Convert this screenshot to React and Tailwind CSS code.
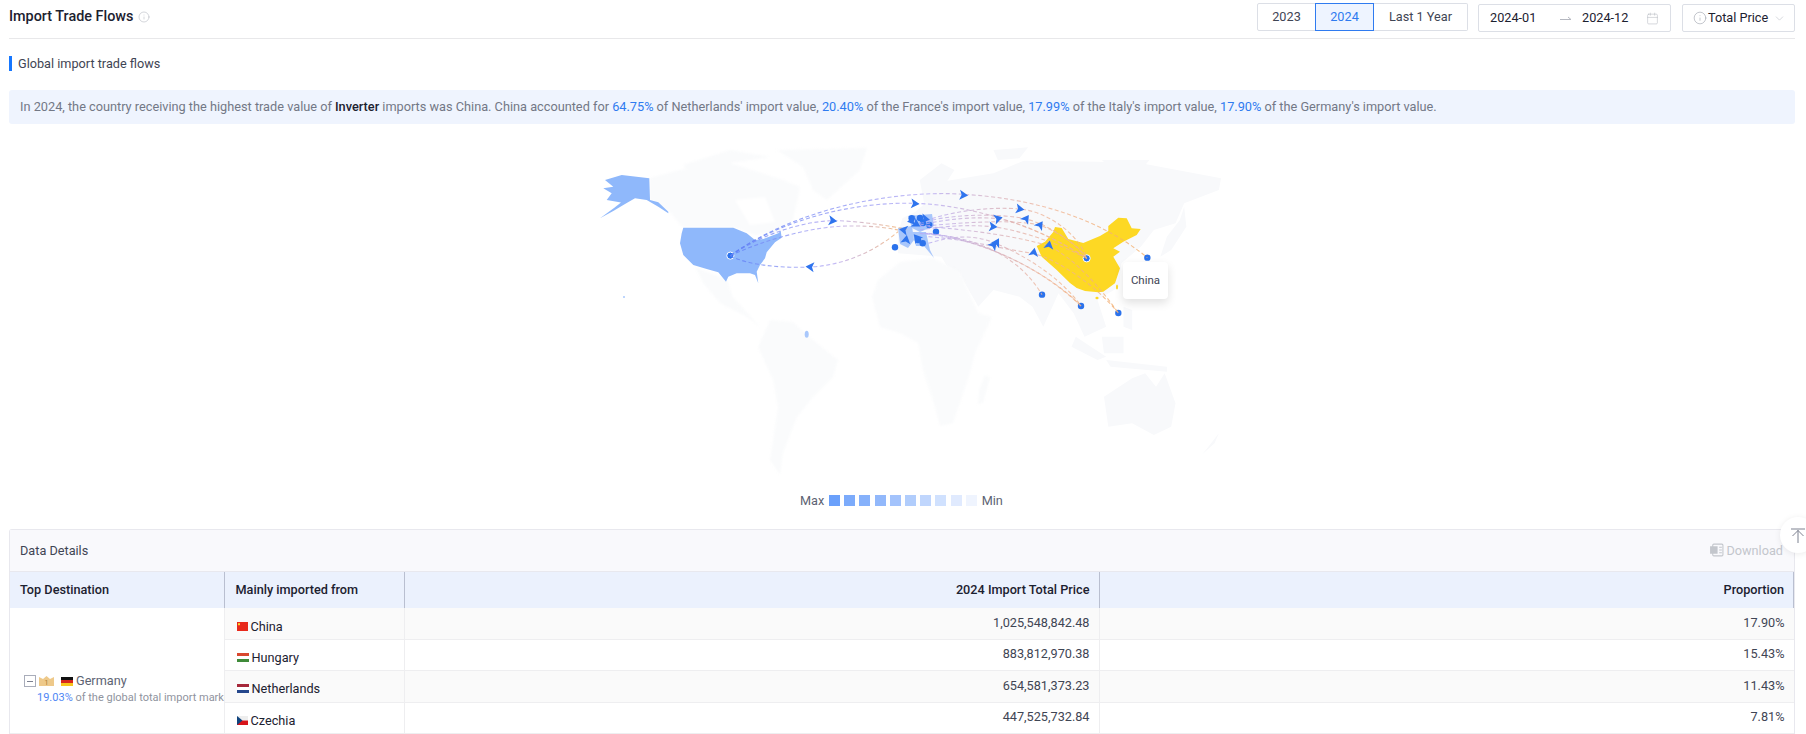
import React from 'react';
import { Info, Calendar, ChevronDown } from 'lucide-react';

const sx = (x) => x / 2.307;
const sy = (y) => y / 3;

// faint land, written in the coordinates of a 1568x1020 map sheet
const land = [
  // eurasia
  'M780,280 L790,235 L820,215 L860,170 L880,125 L1000,100 L1070,62 L1240,65 L1350,72 L1525,115 L1520,150 L1440,190 L1420,250 L1370,270 L1340,320 L1295,370 L1290,440 L1240,480 L1260,560 L1210,590 L1185,520 L1150,460 L1115,560 L1090,500 L1060,470 L1000,450 L965,500 L930,420 L900,395 L880,350 L830,345 L780,340 Z',
  // scandinavia and arctic bits
  'M830,120 L880,70 L910,90 L870,170 L840,190 Z',
  'M1000,30 L1080,22 L1060,55 L1010,60 Z',
  'M1250,60 L1360,60 L1350,75 L1260,72 Z',
  // islands of south east asia
  'M1190,590 L1260,650 L1240,660 L1180,620 Z',
  'M1250,590 L1300,590 L1300,640 L1255,640 Z',
  'M1260,660 L1400,680 L1400,695 L1270,680 Z',
  'M1300,500 L1320,510 L1320,570 L1300,560 Z',
  // japan
  'M1400,290 L1430,240 L1440,200 L1445,260 L1410,330 L1385,350 Z',
  // australia
  'M1255,770 L1320,715 L1350,700 L1375,740 L1395,700 L1420,790 L1410,860 L1370,885 L1320,850 L1265,860 Z',
  // new zealand
  'M1490,930 L1520,880 L1510,910 L1480,945 Z',
];

// same, in page coordinates
const landPage = [
  // north america
  'M650,178 L680,170 L730,163 L783,180 L800,187 L793,220 L780,232 L755,235 L733,227 L682,227 L670,212 L650,200 Z',
  'M683,165 L730,150 L770,157 L730,163 L690,175 Z',
  // mexico
  'M695,267 L727,280 L733,297 L760,327 L747,317 L720,303 L703,283 Z',
  // greenland
  'M777,150 L867,148 L860,170 L827,200 L813,190 L803,167 Z',
  // south america
  'M758,347 L770,320 L793,322 L813,340 L838,360 L833,377 L813,397 L797,417 L783,453 L780,475 L770,460 L778,407 L773,380 Z',
  // africa
  'M872,297 L878,280 L900,262 L933,258 L960,272 L978,313 L992,317 L975,353 L970,373 L953,423 L940,426 L932,397 L923,370 L918,343 L900,333 L880,327 Z',
  // madagascar
  'M985,375 L990,378 L983,403 L978,404 L979,390 Z',
];

const bayWhite = 'M735,200 L765,197 L775,222 L750,225 Z';

const usa = 'M683.3,227.7 L733.3,227.7 L746.7,233.3 L755,240 L763.3,239 L778.3,233.3 L780.7,231 L781.7,237.7 L775,242.3 L766.7,252.3 L765,258.3 L760,265 L756.7,271.7 L758.3,283.3 L755,275 L750,273.3 L736.7,273.3 L728.3,276.7 L726,281.7 L718.3,272.3 L706.7,269 L693.3,265 L683.3,255 L680,243.3 L681.7,233.3 Z';
const alaska = 'M605,180 L621.7,175 L649.3,178.3 L650,200 L658.3,202.3 L668.3,211.7 L668.3,213.3 L658.3,206.7 L646.7,200 L635,198.3 L625,204 L613.3,211 L600,218.3 L614,208 L621,202.5 L606.7,200 L611.7,193.3 L603.3,188.3 L613.3,186.7 Z';
const china = 'M1118.3,217.7 L1126.7,218.3 L1131.7,228.3 L1140.7,229 L1136.7,235 L1123.3,241.7 L1113.3,248.3 L1120,251.7 L1113.3,256.7 L1120,268.3 L1115,283.3 L1103.3,291.7 L1098.3,292.3 L1085,291 L1076.7,288 L1070,283 L1056.7,270 L1041.7,256.7 L1036.7,246 L1045,241.7 L1053.3,232 L1055,227 L1061.7,228 L1068.3,239 L1083.3,243 L1100,236 L1108.3,231 L1108.3,226 Z';

// light patches of the european countries
const europe = [
  'M898,228 L912,226 L914,240 L908,248 L900,244 Z',
  'M908,216 L932,214 L934,226 L920,232 L912,228 Z',
  'M912,232 L926,232 L930,250 L934,258 L924,246 L916,246 Z',
];

const arcs = [
  ['a', 'M393,347 C560,190 800,150 930,163 C1100,175 1250,240 1355,353'],
  ['a', 'M393,347 C520,230 690,185 818,190 C960,195 1120,270 1215,355'],
  ['b', 'M393,347 C470,280 560,245 628,242 C680,242 750,255 800,268'],
  ['b', 'M393,347 C470,300 590,255 677,258 C720,258 750,262 780,270'],
  ['b', 'M393,347 C430,375 510,385 578,381 C660,375 730,330 780,275'],
  ['a', 'M830,250 C900,210 1000,200 1060,207 C1130,215 1200,290 1215,355'],
  ['a', 'M830,255 C900,235 960,230 1010,236 C1060,245 1150,300 1215,355'],
  ['a', 'M830,250 C900,220 1020,220 1075,237 C1130,255 1190,310 1215,355'],
  ['a', 'M830,260 C900,250 1050,235 1107,256 C1150,275 1200,320 1215,355'],
  ['a', 'M830,270 C900,255 950,255 998,260 C1060,270 1150,310 1215,355'],
  ['a', 'M850,310 C900,290 950,280 1005,310 C1080,350 1160,420 1202,498'],
  ['a', 'M840,280 C940,290 1050,330 1112,464'],
  ['a', 'M830,280 C950,290 1100,370 1202,498'],
  ['a', 'M850,290 C950,300 1030,330 1092,340 C1150,360 1240,440 1288,519'],
  ['a', 'M850,260 C950,270 1060,290 1128,318 C1180,350 1240,430 1288,519'],
  ['a', 'M850,280 C980,300 1130,400 1202,498'],
];

const arrows = [
  [930, 165, 5], [818, 191, 5], [628, 242, 8], [578, 381, 185], [1060, 207, 10], [1010, 236, -15],
  [1075, 237, -55], [1107, 256, -55], [998, 260, 5], [1000, 316, -50], [1007, 308, -60], [1128, 316, -80], [1093, 338, -80],
];

const dots = [
  [1355, 353], [1112, 464], [1202, 498], [1288, 519],
];

// european dots and arrows, page coordinates
const euroDots = [
  [911.7, 218.3], [920, 218], [923, 223], [929.3, 225], [936, 231.7], [895, 247.3], [918, 240], [922.7, 243.3],
];
const euroArrows = [
  [904, 230, 190], [917, 238, -130], [912, 221, 170], [925, 219, 10], [906, 240, -80], [916, 224, 30],
];

function WorldMap() {
  return (
    <svg viewBox="0 0 680 340" className="block w-[680px] h-[340px]">
      <defs>
        <linearGradient id="flowA" gradientUnits="userSpaceOnUse" x1="400" y1="0" x2="1300" y2="0">
          <stop offset="0" stopColor="#5f80f6" />
          <stop offset="0.5" stopColor="#b7abf3" />
          <stop offset="0.8" stopColor="#f0b79a" />
          <stop offset="1" stopColor="#f3b070" />
        </linearGradient>
        <linearGradient id="flowB" gradientUnits="userSpaceOnUse" x1="400" y1="0" x2="790" y2="0">
          <stop offset="0" stopColor="#5f80f6" />
          <stop offset="0.6" stopColor="#b7abf3" />
          <stop offset="1" stopColor="#f3b070" />
        </linearGradient>
      </defs>
      <g transform={`scale(${1 / 2.307} ${1 / 3})`} className="blur-[1px]">
        {land.map((d, i) => <path key={i} d={d} fill="#f8f9fb" />)}
      </g>
      <g transform="translate(-560 -140)" className="blur-[1px]">
        {landPage.map((d, i) => <path key={i} d={d} fill="#fafbfc" />)}
        <path d={bayWhite} fill="#ffffff" />
      </g>
      <g transform="translate(-560 -140)">
        <path d={alaska} fill="#8fb8fb" />
        <path d={usa} fill="#8fb8fb" />
        <ellipse cx="806.7" cy="334.3" rx="2" ry="3.5" fill="#a9c8fc" />
        <circle cx="624" cy="297" r="1" fill="#a9c8fc" />
        <path d={china} fill="#fdd824" />
        <ellipse cx="1097" cy="298" rx="1.6" ry="1.3" fill="#fdd824" />
        <ellipse cx="1117" cy="287" rx="1" ry="2.5" fill="#fdd824" />
        {europe.map((d, i) => <path key={i} d={d} fill="#a8c6fb" />)}
        {euroDots.map(([x, y], i) => <circle key={i} cx={x} cy={y} r="3.2" fill="#2b72ec" />)}
      </g>
      {dots.map(([x, y], i) => <circle key={i} cx={sx(x)} cy={sy(y)} r="3.2" fill="#2b72ec" />)}
      <circle cx={sx(393)} cy={sy(347)} r="3.6" fill="#2b72ec" stroke="#ffffff" strokeWidth="1" />
      <circle cx={sx(1215)} cy={sy(355)} r="3.6" fill="#2b72ec" stroke="#ffffff" strokeWidth="1" />
      <g transform={`scale(${1 / 2.307} ${1 / 3})`}>
        {arcs.map(([g, d], i) => (
          <path key={i} d={d} fill="none" stroke={g === 'a' ? 'url(#flowA)' : 'url(#flowB)'} strokeWidth="1.1"
            strokeDasharray="4 2.5" vectorEffect="non-scaling-stroke" opacity="0.8" />
        ))}
      </g>
      {arrows.map(([x, y, r], i) => (
        <polygon key={i} points="-3.5,-5 5,0 -3.5,5 -1.5,0" fill="#2f74ee"
          transform={`translate(${sx(x)} ${sy(y)}) rotate(${r})`} />
      ))}
      <g transform="translate(-560 -140)">
        {euroArrows.map(([x, y, r], i) => (
          <polygon key={i} points="-3.5,-5 5,0 -3.5,5 -1.5,0" fill="#2f74ee" transform={`translate(${x} ${y}) rotate(${r})`} />
        ))}
      </g>
    </svg>
  );
}

function FlagCN() {
  return (
    <svg width="11" height="9" viewBox="0 0 11 9" className="shrink-0">
      <rect width="11" height="9" fill="#e8291c" />
      <rect x="1" y="1.2" width="2" height="2" fill="#fbd92a" />
    </svg>
  );
}

function FlagStripes({ colors }) {
  return (
    <svg width="12" height="9" viewBox="0 0 12 9" className="shrink-0">
      <rect width="12" height="3" y="0" fill={colors[0]} />
      <rect width="12" height="3" y="3" fill={colors[1]} />
      <rect width="12" height="3" y="6" fill={colors[2]} />
    </svg>
  );
}

function FlagCZ() {
  return (
    <svg width="11" height="9" viewBox="0 0 11 9" className="shrink-0">
      <rect width="11" height="4.5" fill="#eeeeee" />
      <rect width="11" height="4.5" y="4.5" fill="#d7141a" />
      <polygon points="0,0 5.5,4.5 0,9" fill="#11457e" />
    </svg>
  );
}

const rows = [
  { name: 'China', flag: <FlagCN />, price: '1,025,548,842.48', share: '17.90%', bg: 'bg-[#fafafa]', h: 'h-[31px]' },
  { name: 'Hungary', flag: <FlagStripes colors={['#d9482f', '#ffffff', '#3f8b3a']} />, price: '883,812,970.38', share: '15.43%', bg: 'bg-white', h: 'h-[31px]' },
  { name: 'Netherlands', flag: <FlagStripes colors={['#a6283a', '#ffffff', '#25478c']} />, price: '654,581,373.23', share: '11.43%', bg: 'bg-[#fafafa]', h: 'h-[32px]' },
  { name: 'Czechia', flag: <FlagCZ />, price: '447,525,732.84', share: '7.81%', bg: 'bg-white', h: 'h-[31px]' },
];

const legend = ['bg-[#6aa0fb]', 'bg-[#7cabfb]', 'bg-[#86b1fb]', 'bg-[#92b8fb]', 'bg-[#a3c3fc]', 'bg-[#b1cdfc]', 'bg-[#c0d6fd]', 'bg-[#d0e1fe]', 'bg-[#e0eafe]', 'bg-[#eff4fe]'];

export default function App() {
  return (
    <div className="relative w-full h-[734px] overflow-hidden bg-white pl-[9px] pr-[11px] font-['Roboto',sans-serif] text-[12.7px] text-[#5d6373]">
      {/* header */}
      <div className="flex items-start justify-between h-[39px] border-b border-[#e8e8ea]">
        <div className="flex items-center gap-[5px] h-[34px]">
          <span className="text-[14.4px] font-medium text-[#1c2130]">Import Trade Flows</span>
          <Info size={12} strokeWidth={1} className="text-[#a8acb6]" />
        </div>
        <div className="flex items-start pt-[3px]">
          <div className="flex h-[28px] text-[#3f4554]">
            <div className="w-[59px] flex items-center justify-center border border-[#dcdfe6] rounded-l-[2px]">2023</div>
            <div className="w-[59px] flex items-center justify-center border border-[#2f7bf0] bg-[#eef4ff] text-[#2f7bf0] -ml-px">2024</div>
            <div className="w-[94px] flex items-center justify-center border border-[#dcdfe6] border-l-0 rounded-r-[2px]">Last 1 Year</div>
          </div>
          <div className="ml-[10px] mt-px w-[193px] h-[28px] flex items-center border border-[#dcdfe6] rounded-[2px] pl-[11px] text-[#1c2130]">
            <span className="w-[66px]">2024-01</span>
            <svg width="14" height="8" viewBox="0 0 14 8" className="ml-[3px] text-[#b5b8c0]">
              <path d="M1 5.5 H12 L9 3" fill="none" stroke="currentColor" strokeWidth="1" />
            </svg>
            <span className="ml-[9px] w-[64px]">2024-12</span>
            <Calendar size={13} strokeWidth={1} className="text-[#b5b8c0]" />
          </div>
          <div className="ml-[11px] mt-px w-[113px] h-[28px] flex items-center border border-[#dcdfe6] rounded-[2px] pl-[10px] text-[#1c2130]">
            <Info size={14} strokeWidth={1} className="text-[#9a9ea8] mr-px" />
            <span>Total Price</span>
            <ChevronDown size={13} strokeWidth={1} className="ml-[5px] text-[#b5b8c0]" />
          </div>
        </div>
      </div>

      {/* section label */}
      <div className="flex items-center mt-[17px] h-[15px]">
        <div className="w-[3px] h-[15px] bg-[#1677ff]" />
        <span className="ml-[6px] text-[#3f4554]">Global import trade flows</span>
      </div>

      {/* summary */}
      <div className="mt-[19px] h-[34px] flex items-center rounded-[3px] bg-[#eff4fe] px-[11px] text-[12.74px] text-[#737886] whitespace-nowrap">
        <span>
          In 2024, the country receiving the highest trade value of <span className="font-medium text-[#1c2130]">Inverter</span> imports was China. China accounted for <span className="text-[#2f7bf0]">64.75%</span> of Netherlands' import value, <span className="text-[#2f7bf0]">20.40%</span> of the France's import value, <span className="text-[#2f7bf0]">17.99%</span> of the Italy's import value, <span className="text-[#2f7bf0]">17.90%</span> of the Germany's import value.
        </span>
      </div>

      {/* map */}
      <div className="relative h-[366px] pt-[16px] pl-[551px]">
        <WorldMap />
        <div className="absolute left-[1114px] top-[138px] w-[45px] h-[37px] flex items-center justify-center rounded-[4px] bg-white text-[11.5px] text-[#3f4554] shadow-[0_4px_10px_rgba(0,0,0,0.12)]">China</div>
      </div>

      {/* legend */}
      <div className="flex items-center h-[11px] mt-[5px] ml-[791px]">
        <span className="w-[29px]">Max</span>
        <div className="flex gap-[4.2px]">
          {legend.map((c) => <div key={c} className={`w-[11px] h-[11px] ${c}`} />)}
        </div>
        <span className="ml-[5px]">Min</span>
      </div>

      {/* table card */}
      <div className="mt-[23px] border border-b-0 border-[#e8e8ee] rounded-t-[3px]">
        <div className="flex items-center justify-between h-[42px] border-b border-[#e8e8ee] bg-[#f9f9fc] pl-[10px] pr-[11px]">
          <span className="text-[#3f4554]">Data Details</span>
          <div className="flex items-center gap-[3px] text-[#c3c6cc]">
            <svg width="15" height="14" viewBox="0 0 14 13" fill="none">
              <rect x="3.5" y="1" width="9.5" height="11" rx="1" stroke="currentColor" />
              <rect x="1" y="3" width="7" height="7" fill="currentColor" />
              <path d="M9.5 4 H12 M9.5 6.5 H12 M9.5 9 H12" stroke="currentColor" />
            </svg>
            <span>Download</span>
          </div>
        </div>
        <table className="w-full table-fixed border-collapse">
          <colgroup>
            <col className="w-[214px]" />
            <col className="w-[180px]" />
            <col className="w-[695px]" />
            <col />
          </colgroup>
          <thead>
            <tr className="h-[36px] bg-[#ebf1fd] text-[#1c2130]">
              <th className="font-medium text-left pl-[10px] border-r border-[#b9bfd0]">Top Destination</th>
              <th className="font-medium text-left pl-[11px] border-r border-[#b9bfd0]">Mainly imported from</th>
              <th className="font-medium text-right pr-[9px] border-r border-[#b9bfd0]">2024 Import Total Price</th>
              <th className="font-medium text-right pr-[9px] border-r border-[#b9bfd0]">Proportion</th>
            </tr>
          </thead>
          <tbody>
            {rows.map((r, i) => (
              <tr key={r.name} className={`${r.h} ${r.bg} border-b border-[#eeeef0]`}>
                {i === 0 && (
                  <td rowSpan={4} className="bg-white align-top p-0">
                    <div className="w-[214px] overflow-hidden whitespace-nowrap pt-[67px]">
                      <div className="flex items-center pl-[14px] h-[12px]">
                        <div className="w-[12px] h-[12px] flex items-center justify-center border border-[#a9adba]">
                          <div className="w-[6px] h-px bg-[#7d8190]" />
                        </div>
                        <svg width="15" height="10" viewBox="0 0 15 10" className="ml-[3px]">
                          <path d="M0 1 L4 3 L7.5 0 L11 3 L15 1 V10 H0 Z" fill="#eec98a" />
                          <text x="7.5" y="8.5" fontSize="7" textAnchor="middle" fill="#a97e35">1</text>
                        </svg>
                        <div className="ml-[7px]"><FlagStripes colors={['#111111', '#d8261c', '#f7c51c']} /></div>
                        <span className="ml-[3px] text-[#5d6373]">Germany</span>
                      </div>
                      <div className="pl-[27px] mt-[3px] text-[11px] text-[#8f939e]">
                        <span className="text-[#4f87f5]">19.03%</span> of the global total import market
                      </div>
                    </div>
                  </td>
                )}
                <td className="pl-[12px] pt-[6px] border-x border-[#eeeef0]">
                  <div className="flex items-center gap-[3px] text-[#1c2130]">{r.flag}<span>{r.name}</span></div>
                </td>
                <td className="text-right pr-[9px] pb-px border-r border-[#eeeef0] text-[#3f4554]">{r.price}</td>
                <td className="text-right pr-[9px] pb-px text-[#3f4554]">{r.share}</td>
              </tr>
            ))}
          </tbody>
        </table>
      </div>

      {/* back to top */}
      <div className="absolute left-[1780px] top-[517px] w-[36px] h-[36px] rounded-full bg-white shadow-[0_1px_6px_rgba(0,0,0,0.08)] flex items-start pl-[11px] pt-[11px] text-[#7d8190]">
        <svg width="14" height="16" viewBox="0 0 14 16" fill="none" stroke="currentColor" strokeWidth="1" className="shrink-0">
          <path d="M0 1 H14 M7 15 V2 M1.5 8 L7 2.5 L12.5 8" />
        </svg>
      </div>
    </div>
  );
}
